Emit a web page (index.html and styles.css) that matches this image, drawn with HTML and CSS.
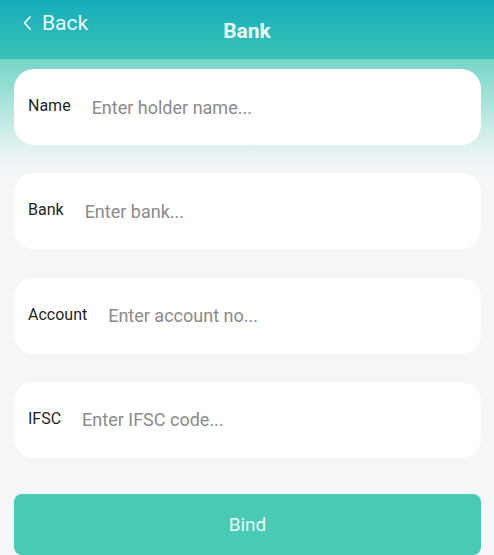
FILE: index.html
```html
<!DOCTYPE html>
<html lang="en">
<head>
    <meta charset="UTF-8">
    <meta name="viewport" content="width=device-width, initial-scale=1.0">
    <title>Bank</title>
    <link rel="stylesheet" href="styles.css">
</head>
<body>
    <header class="top-bar">
        <a href="#" class="back-link">
            <svg width="12" height="16" viewBox="0 0 12 16" fill="none" stroke="currentColor" stroke-width="1.8" stroke-linecap="round" stroke-linejoin="round"><path d="M8 2 2.5 8 8 14"/></svg>
            Back
        </a>
        <h1>Bank</h1>
    </header>
    <main class="form-area">
        <label class="field">
            <span class="field-label">Name</span>
            <input type="text" placeholder="Enter holder name...">
        </label>
        <label class="field">
            <span class="field-label">Bank</span>
            <input type="text" placeholder="Enter bank...">
        </label>
        <label class="field">
            <span class="field-label">Account</span>
            <input type="text" placeholder="Enter account no...">
        </label>
        <label class="field">
            <span class="field-label">IFSC</span>
            <input type="text" placeholder="Enter IFSC code...">
        </label>
        <button class="bind-button">Bind</button>
    </main>
</body>
</html>
```

FILE: styles.css
```css
body, html {
    margin: 0;
    padding: 0;
    font-family: Roboto, 'Noto Sans', sans-serif;
    background-color: #f4f6f8;
}
.top-bar {
    position: relative;
    height: 59px;
    display: flex;
    align-items: center;
    justify-content: center;
    background: linear-gradient(to bottom, #15adba, #3bc2b7);
    color: #eafcf9;
}
.top-bar h1 {
    margin: 0;
    font-size: 21px;
    font-weight: 700;
    margin-top: 2px;
}
.back-link {
    position: absolute;
    left: 22px;
    top: 11px;
    display: flex;
    align-items: center;
    gap: 8px;
    color: inherit;
    text-decoration: none;
    font-size: 21px;
}
.form-area {
    display: flex;
    flex-direction: column;
    gap: 28.3px;
    padding: 10px 13px 0 14px;
    background: linear-gradient(to bottom, #74d5c7 0, #c9ede7 70px, #eef5f6 100px, #f4f6f8 120px);
}
.field {
    height: 76px;
    display: flex;
    align-items: center;
    gap: 21px;
    padding: 0 14px;
    background-color: white;
    border-radius: 20px;
}
.field-label {
    font-size: 16px;
    color: #1f1f1f;
    margin-top: -3px;
}
.field input {
    flex-grow: 1;
    border: none;
    outline: none;
    padding: 0;
    font-family: inherit;
    font-size: 18px;
    color: #333;
    background: none;
}
.field input::placeholder {
    color: #8a8a8a;
}
.bind-button {
    height: 61px;
    margin-top: 8px;
    border: none;
    border-radius: 8px;
    background-color: #4ac9b5;
    color: #e6fbf7;
    font-family: inherit;
    font-size: 19px;
    cursor: pointer;
}
```
